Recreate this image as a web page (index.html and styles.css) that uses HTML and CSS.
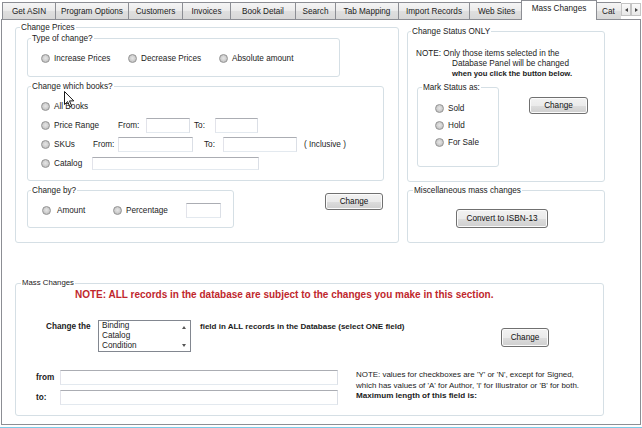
FILE: index.html
```html
<!DOCTYPE html>
<html>
<head>
<meta charset="utf-8">
<link rel="stylesheet" href="styles.css">
</head>
<body>
<div class="tabs">
  <div class="tab w-asin">Get ASIN</div>
  <div class="tab w-prog">Program Options</div>
  <div class="tab w-cust">Customers</div>
  <div class="tab w-inv">Invoices</div>
  <div class="tab w-book">Book Detail</div>
  <div class="tab w-search">Search</div>
  <div class="tab w-map">Tab Mapping</div>
  <div class="tab w-imp">Import Records</div>
  <div class="tab w-web">Web Sites</div>
  <div class="tab sel">Mass Changes</div>
  <div class="tab cat">Cat</div>
  <div class="arrows">
    <span class="arr"><span class="tri-l"></span></span>
    <span class="arr"><span class="tri-r"></span></span>
  </div>
</div>
<div class="page">
  <div class="toprow">
    <fieldset class="grp prices">
      <legend>Change Prices</legend>
      <fieldset class="grp type">
        <legend>Type of change?</legend>
        <div class="row3">
          <span class="opt o-inc"><span class="rad"></span>Increase Prices</span>
          <span class="opt o-dec"><span class="rad"></span>Decrease Prices</span>
          <span class="opt"><span class="rad"></span>Absolute amount</span>
        </div>
      </fieldset>
      <fieldset class="grp books">
        <legend>Change which books?</legend>
        <div class="brow">
          <span class="opt"><span class="rad"></span>All Books</span>
        </div>
        <div class="brow">
          <span class="opt o-pr"><span class="rad"></span>Price Range</span>
          <span class="lbl l-from1">From:</span>
          <span class="tb tb-p1"></span>
          <span class="lbl l-to1">To:</span>
          <span class="tb tb-p2"></span>
        </div>
        <div class="brow">
          <span class="opt o-sku"><span class="rad"></span>SKUs</span>
          <span class="lbl l-from2">From:</span>
          <span class="tb tb-s1"></span>
          <span class="lbl l-to2">To:</span>
          <span class="tb tb-s2"></span>
          <span class="lbl l-inc">( Inclusive )</span>
        </div>
        <div class="brow">
          <span class="opt o-cat"><span class="rad"></span>Catalog</span>
          <span class="tb tb-cat"></span>
        </div>
      </fieldset>
      <div class="byrow">
        <fieldset class="grp by">
          <legend>Change by?</legend>
          <div class="byline">
            <span class="opt o-amt"><span class="rad"></span>Amount</span>
            <span class="opt o-pct"><span class="rad"></span>Percentage</span>
            <span class="tb tb-by"></span>
          </div>
        </fieldset>
        <button class="btn btn-by">Change</button>
      </div>
    </fieldset>
    <div class="rightcol">
      <fieldset class="grp status">
        <legend>Change Status ONLY</legend>
        <div class="note">
          <div>NOTE: Only those items selected in the</div>
          <div class="note-in">Database Panel will be changed</div>
          <div class="note-in note-b">when you click the button below.</div>
        </div>
        <div class="markrow">
          <fieldset class="grp mark">
            <legend>Mark Status as:</legend>
            <div class="mline"><span class="opt"><span class="rad"></span>Sold</span></div>
            <div class="mline"><span class="opt"><span class="rad"></span>Hold</span></div>
            <div class="mline"><span class="opt"><span class="rad"></span>For Sale</span></div>
          </fieldset>
          <button class="btn btn-st">Change</button>
        </div>
      </fieldset>
      <fieldset class="grp misc">
        <legend>Miscellaneous mass changes</legend>
        <button class="btn btn-isbn">Convert to ISBN-13</button>
      </fieldset>
    </div>
  </div>
  <fieldset class="grp mass">
    <legend>Mass Changes</legend>
    <div class="note-red">NOTE: ALL records in the database are subject to the changes you make in this section.</div>
    <div class="chrow">
      <span class="chlabel">Change the</span>
      <div class="lst">
        <div class="lst-items">Binding<br>Catalog<br>Condition</div>
        <div class="lst-sb"><span class="up"></span><span class="dn"></span></div>
      </div>
      <span class="fieldtxt">field in ALL records in the Database (select ONE field)</span>
      <button class="btn btn-mass">Change</button>
    </div>
    <div class="ftrow">
      <div class="ftleft">
        <div class="ftl"><b class="ftlab">from</b><span class="tb tb-ft"></span></div>
        <div class="ftl"><b class="ftlab">to:</b><span class="tb tb-ft"></span></div>
      </div>
      <div class="ftnote">NOTE: values for checkboxes are 'Y' or 'N', except for Signed,<br>which has values of 'A' for Author, 'I' for Illustrator or 'B' for both.<br><b class="maxlen">Maximum length of this field is:</b></div>
    </div>
  </fieldset>
</div>
<div class="blueline"></div>
<svg class="cursor" width="12" height="17" viewBox="0 0 12 17">
  <path d="M0.5 0.5 L0.5 13.5 L3.6 10.6 L5.8 15.6 L7.6 14.8 L5.5 9.9 L9.8 9.9 Z" fill="#fff" stroke="#000" stroke-width="0.9" stroke-linejoin="miter"/>
</svg>
</body>
</html>
```

FILE: styles.css
```css
* { box-sizing: border-box; }
html, body { margin: 0; padding: 0; background: #fff; }
body {
  font-family: "Liberation Sans", Arial, sans-serif;
  font-size: 8.2px;
  color: #1b1b1b;
  width: 642px;
  height: 428px;
  overflow: hidden;
  position: relative;
}

/* tabs */
.tabs { display: flex; align-items: flex-end; height: 19px; padding-left: 2px; }
.tab {
  height: 17px;
  border: 1px solid #8c8e94;
  border-bottom: none;
  margin-right: -1px;
  background: linear-gradient(#f5f5f5, #ebebeb 50%, #dfdfdf 51%, #d8d8d8);
  display: flex;
  align-items: center;
  justify-content: center;
  white-space: nowrap;
  overflow: hidden;
  padding-top: 1px;
}
.w-asin { width: 54px; }
.w-prog { width: 74px; }
.w-cust { width: 55px; }
.w-inv { width: 49px; }
.w-book { width: 66px; }
.w-search { width: 41px; }
.w-map { width: 64px; }
.w-imp { width: 72px; }
.w-web { width: 55px; }
.tab.sel {
  width: 76px;
  height: 20px;
  margin-bottom: -1px;
  margin-left: -2px;
  margin-right: -3px;
  background: #fff;
  position: relative;
  z-index: 2;
  align-items: flex-start;
  padding-top: 3px;
}
.tab.cat { width: 27px; justify-content: flex-start; padding-left: 7px; border-right: none; }
.arrows { display: flex; align-self: flex-start; margin-top: 3px; margin-left: 1px; }
.arr {
  width: 10px; height: 13px;
  border: 1px solid #c4c4c4;
  background: linear-gradient(#fafafa, #e8e8e8);
  display: flex; align-items: center; justify-content: center;
}
.tri-l { width: 0; height: 0; border-style: solid; border-width: 2.5px 3px 2.5px 0; border-color: transparent #444 transparent transparent; }
.tri-r { width: 0; height: 0; border-style: solid; border-width: 2.5px 0 2.5px 3px; border-color: transparent transparent transparent #444; }

/* page */
.page {
  margin-left: 1px;
  width: 640px;
  height: 406px;
  border: 1px solid #8c8e94;
  background: #fff;
  padding-top: 2px;
}
.toprow { display: flex; align-items: flex-start; padding-left: 13px; }

.grp {
  border: 1px solid #d5dfe5;
  border-radius: 3px;
  margin: 0;
  min-width: 0;
}
.grp > legend { padding: 0 1px; line-height: 11px; height: 11px; }

.prices { width: 384px; padding: 0 0 14px 11px; }
.prices > legend { margin-left: -7px; }

.type { width: 313px; padding: 9px 0 12px 13px; }
.type > legend { margin-left: -10px; }
.row3 { display: flex; align-items: center; height: 11px; }
.opt { display: flex; align-items: center; white-space: nowrap; line-height: 11px; }
.rad {
  width: 9px; height: 9px;
  border-radius: 50%;
  border: 1px solid #939393;
  background: radial-gradient(circle at 50% 45%, #e6e6e6 0, #d2d2d2 45%, #c2c2c2 70%, #ececec 100%);
  margin-right: 4px;
  flex: none;
}
.o-inc { width: 87px; }
.o-dec { width: 91px; }

.books { width: 357px; margin-top: 4px; padding: 5px 0 7px 13px; }
.books > legend { margin-left: -10px; }
.brow { display: flex; align-items: center; height: 19px; }
.lbl { white-space: nowrap; flex: none; }
.tb {
  display: block;
  flex: none;
  height: 15px;
  border: 1px solid;
  border-color: #abadb3 #dbdfe6 #e3e9ef #e2e3ea;
  background: #fff;
}
.o-pr { width: 77px; }
.l-from1 { width: 28px; }
.tb-p1 { width: 44px; }
.l-to1 { width: 21px; margin-left: 4px; }
.tb-p2 { width: 43px; }
.o-sku { width: 52px; }
.l-from2 { width: 25px; }
.tb-s1 { width: 75px; }
.l-to2 { width: 19px; margin-left: 11px; }
.tb-s2 { width: 74px; }
.l-inc { margin-left: 7px; }
.o-cat { width: 51px; }
.tb-cat { width: 167px; height: 13px; }

.byrow { display: flex; align-items: flex-start; margin-top: 4px; }
.by { width: 207px; padding: 7px 0 9px 14px; }
.by > legend { margin-left: -11px; }
.byline { display: flex; align-items: center; height: 15px; }
.o-amt { width: 71px; }
.o-amt .rad { margin-right: 6px; }
.o-pct { width: 73px; }
.tb-by { width: 35px; }

.btn {
  font: inherit;
  color: #111;
  padding: 0;
  height: 17px;
  border: 1px solid #707070;
  border-radius: 3px;
  background: linear-gradient(#f2f2f2 0%, #ebebeb 50%, #dddddd 51%, #cfcfcf 100%);
  box-shadow: inset 0 0 0 1px #fbfbfb;
  flex: none;
}
.btn-by { width: 58px; margin-left: 91px; margin-top: 8px; }

/* right column */
.rightcol { width: 198px; margin-left: 8px; margin-top: 4px; }
.status { width: 198px; padding: 12px 0 14px 8px; }
.status > legend { margin-left: -5px; }
.note { line-height: 10px; white-space: nowrap; }
.note-in { padding-left: 36px; }
.note-b { font-weight: bold; font-size: 7.7px; }
.markrow { display: flex; align-items: flex-start; margin-top: 3px; margin-left: 1px; }
.mark { width: 82px; padding: 7px 0 15px 17px; }
.mark > legend { margin-left: -13px; }
.mline { display: flex; align-items: center; height: 17px; }
.btn-st { width: 59px; margin-left: 30px; margin-top: 15px; }

.misc { width: 198px; margin-top: 3px; padding: 13px 0 14px 48px; }
.misc > legend { margin-left: -43px; }
.btn-isbn { width: 92px; height: 19px; display: block; }

/* mass changes */
.mass { width: 589px; margin: 35px 0 0 13px; padding: 1px 0 10px 20px; }
.mass > legend { margin-left: -15px; font-size: 7.8px; line-height: 10px; height: 10px; }
.note-red { color: #c0272d; font-weight: bold; font-size: 10px; line-height: 12px; margin-left: 39px; white-space: nowrap; }
.chrow { display: flex; align-items: flex-start; margin-top: 19px; }
.chlabel { width: 52px; margin-left: 10px; font-weight: bold; line-height: 11px; padding-top: 1px; flex: none; }
.lst { width: 93px; height: 32px; border: 1px solid #828790; display: flex; flex: none; background: #fff; }
.lst-items { flex: 1; padding-left: 3px; line-height: 10px; }
.lst-sb { width: 12px; display: flex; flex-direction: column; justify-content: space-between; align-items: center; padding: 5px 0 4px; }
.up { width: 0; height: 0; border-style: solid; border-width: 0 2.5px 3px 2.5px; border-color: transparent transparent #555 transparent; }
.dn { width: 0; height: 0; border-style: solid; border-width: 3px 2.5px 0 2.5px; border-color: #555 transparent transparent transparent; }
.fieldtxt { width: 301px; margin-left: 9px; font-weight: bold; font-size: 8px; line-height: 11px; padding-top: 1px; flex: none; white-space: nowrap; }
.btn-mass { width: 48px; height: 19px; margin-top: 8px; }

.ftrow { display: flex; margin-top: 18px; }
.ftleft { display: flex; flex-direction: column; gap: 5px; }
.ftl { display: flex; align-items: center; height: 15px; }
.ftlab { width: 24px; flex: none; }
.tb-ft { width: 278px; }
.ftnote { margin-left: 18px; line-height: 10.5px; font-size: 7.95px; white-space: nowrap; }
.maxlen { font-size: 8.1px; }

.blueline { height: 1px; margin-top: 2px; background: #7ccbe8; }

.cursor { position: absolute; left: 64px; top: 91px; }
```
